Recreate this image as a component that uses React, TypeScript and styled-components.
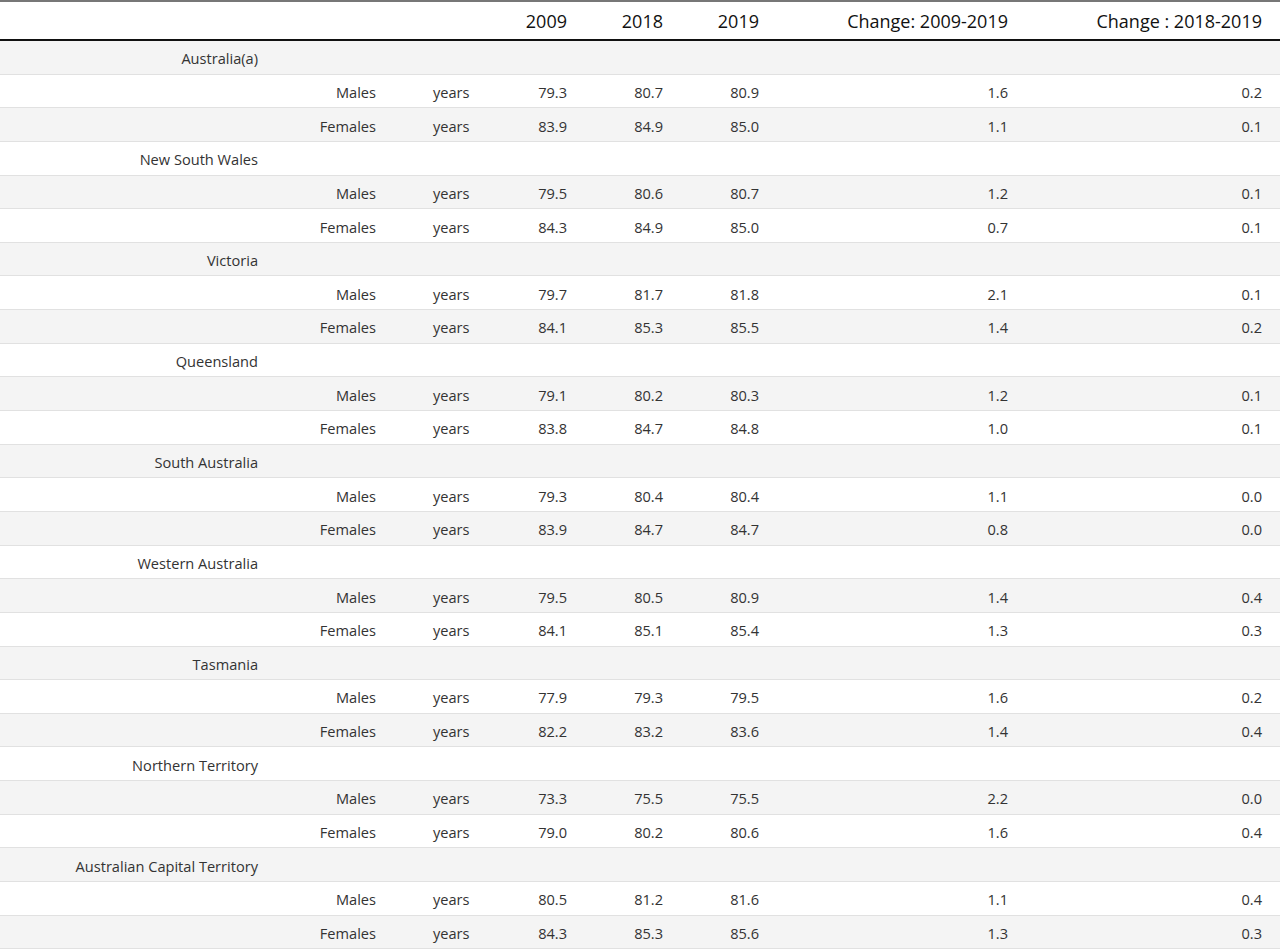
import { createGlobalStyle } from "styled-components";
import styled from "styled-components";

const GlobalStyle = createGlobalStyle`
  html, body {
    margin: 0;
    padding: 0;
    background: #ffffff;
  }
  body {
    font-family: "Open Sans", "Noto Sans", "Liberation Sans", sans-serif;
    color: #333333;
  }
`;

type Row = [string, number[], number[]];

const regions: Row[] = [
  ["Australia(a)", [79.3, 80.7, 80.9, 1.6, 0.2], [83.9, 84.9, 85.0, 1.1, 0.1]],
  ["New South Wales", [79.5, 80.6, 80.7, 1.2, 0.1], [84.3, 84.9, 85.0, 0.7, 0.1]],
  ["Victoria", [79.7, 81.7, 81.8, 2.1, 0.1], [84.1, 85.3, 85.5, 1.4, 0.2]],
  ["Queensland", [79.1, 80.2, 80.3, 1.2, 0.1], [83.8, 84.7, 84.8, 1.0, 0.1]],
  ["South Australia", [79.3, 80.4, 80.4, 1.1, 0.0], [83.9, 84.7, 84.7, 0.8, 0.0]],
  ["Western Australia", [79.5, 80.5, 80.9, 1.4, 0.4], [84.1, 85.1, 85.4, 1.3, 0.3]],
  ["Tasmania", [77.9, 79.3, 79.5, 1.6, 0.2], [82.2, 83.2, 83.6, 1.4, 0.4]],
  ["Northern Territory", [73.3, 75.5, 75.5, 2.2, 0.0], [79.0, 80.2, 80.6, 1.6, 0.4]],
  ["Australian Capital Territory", [80.5, 81.2, 81.6, 1.1, 0.4], [84.3, 85.3, 85.6, 1.3, 0.3]],
];

// column widths, measured from the reference
const widths = [276, 118, 95, 96, 96, 96, 249, 254];

export default function App() {
  const rows: { label: string; sex?: string; values?: number[] }[] = [];
  regions.forEach(([name, m, f]) => {
    rows.push({ label: name });
    rows.push({ label: "", sex: "Males", values: m });
    rows.push({ label: "", sex: "Females", values: f });
  });

  return (
    <>
      <GlobalStyle />
      <Table>
        <colgroup>
          {widths.map((w, i) => (
            <col key={i} style={{ width: w }} />
          ))}
        </colgroup>
        <thead>
          <tr>
            <HeadCell />
            <HeadCell />
            <HeadCell />
            <HeadCell>2009</HeadCell>
            <HeadCell>2018</HeadCell>
            <HeadCell>2019</HeadCell>
            <HeadCell>Change: 2009-2019</HeadCell>
            <HeadCell>Change : 2018-2019</HeadCell>
          </tr>
        </thead>
        <tbody>
          {rows.map((r, i) => (
            <BodyRow key={i} $striped={i % 2 === 0}>
              <Cell>{r.label}</Cell>
              <Cell>{r.sex ?? ""}</Cell>
              <UnitCell>{r.values ? "years" : ""}</UnitCell>
              {[0, 1, 2, 3, 4].map((k) => (
                <Cell key={k}>{r.values ? r.values[k].toFixed(1) : ""}</Cell>
              ))}
            </BodyRow>
          ))}
        </tbody>
      </Table>
    </>
  );
}

const Table = styled.table`
  width: 1280px;
  table-layout: fixed;
  border-collapse: collapse;
  border-top: 2px solid #777777;
`;

const HeadCell = styled.th`
  height: 37px;
  padding: 0 18px;
  text-align: right;
  font-size: 18px;
  font-weight: 400;
  color: #111111;
  border-bottom: 2px solid #111111;
  white-space: nowrap;
`;

const BodyRow = styled.tr<{ $striped: boolean }>`
  background: ${(p) => (p.$striped ? "#f4f4f4" : "#ffffff")};
  border-bottom: 1px solid #e1e1e1;
`;

const Cell = styled.td`
  height: 30.65px;
  padding: 2px 18px 0 18px;
  text-align: right;
  font-size: 14.6px;
  line-height: 20px;
  color: #333333;
  white-space: nowrap;
  vertical-align: middle;
`;

const UnitCell = styled(Cell)`
  text-align: left;
  padding-left: 39px;
`;
